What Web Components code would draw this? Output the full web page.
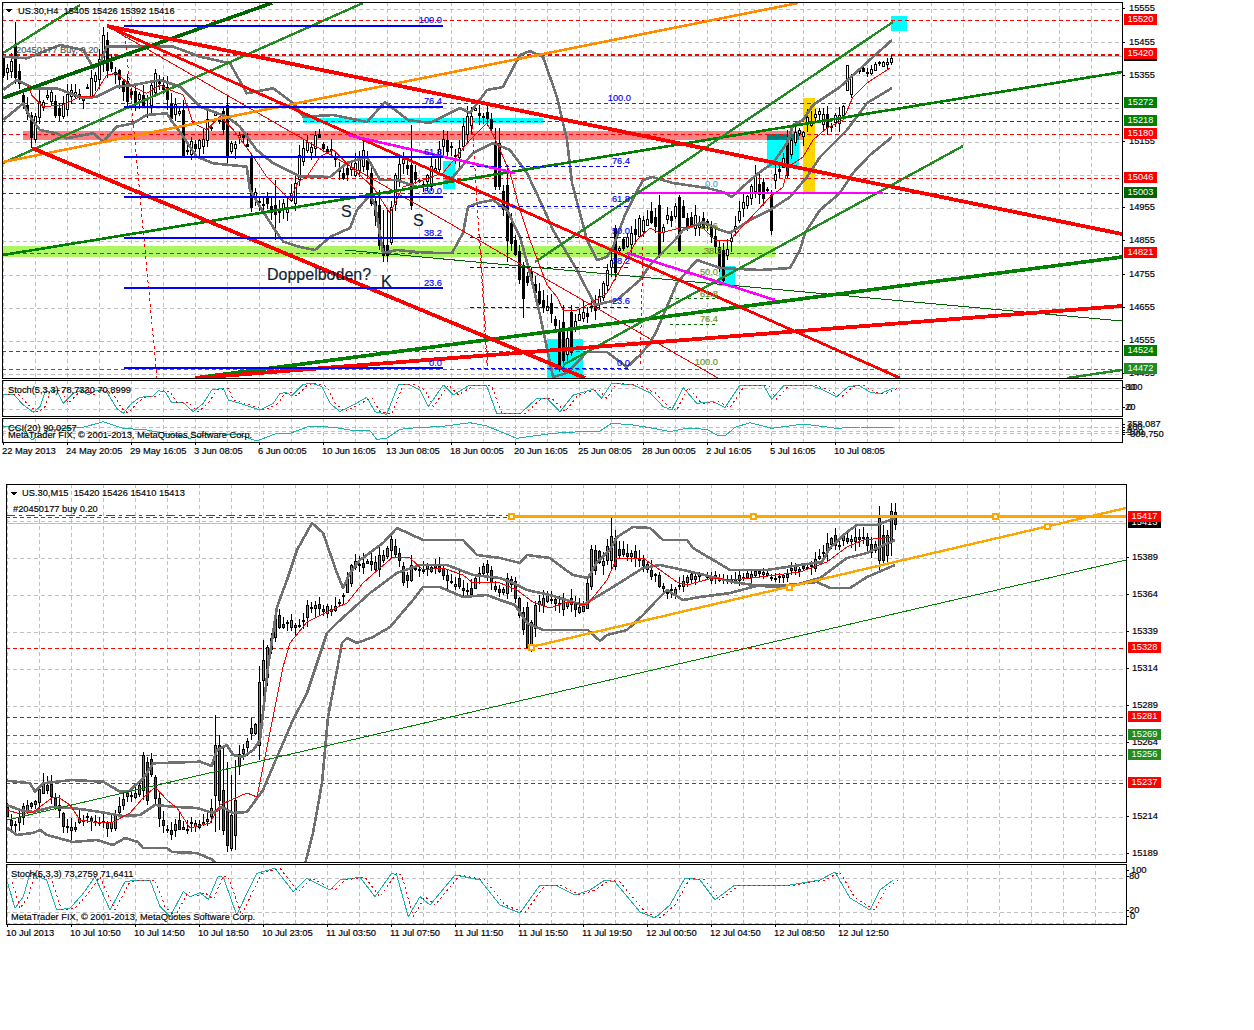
<!doctype html>
<html>
<head>
<meta charset="utf-8">
<title>US.30 charts</title>
<style>
  html, body { margin: 0; background: #fff; }
</style>
</head>
<body>
<mt-screen>
  <mt-window name="h4" axis="22 May 2013|24 May 20:05|29 May 16:05|3 Jun 08:05|6 Jun 00:05|10 Jun 16:05|13 Jun 08:05|18 Jun 00:05|20 Jun 16:05|25 Jun 08:05|28 Jun 00:05|2 Jul 16:05|5 Jul 16:05|10 Jul 08:05">
    <mt-pane name="h4main"></mt-pane>
    <mt-pane name="h4stoch"></mt-pane>
    <mt-pane name="h4cci"></mt-pane>
  </mt-window>
  <mt-window name="m15" axis="10 Jul 2013|10 Jul 10:50|10 Jul 14:50|10 Jul 18:50|10 Jul 23:05|11 Jul 03:50|11 Jul 07:50|11 Jul 11:50|11 Jul 15:50|11 Jul 19:50|12 Jul 00:50|12 Jul 04:50|12 Jul 08:50|12 Jul 12:50">
    <mt-pane name="m15main"></mt-pane>
    <mt-pane name="m15stoch"></mt-pane>
  </mt-window>
</mt-screen>

<script>
// zoom crop coords -> page coords
const z = (ox, oy, a) => { const r = []; for (let i = 0; i < a.length; i += 2) r.push([ox + a[i] / 3, oy + a[i + 1] / 3]); return r; };
const pg = a => z(0, 0, a.map(v => v * 3));

const RED = '#ff0000', GREEN = '#008000', DKGREEN = '#006400', FOREST = '#228b22', ORANGE = '#ff8c00', BLUE = '#0000ff', MAGENTA = '#ff00ff', GOLD = '#ffa500', GRAY = '#707070';
const DASH = '4 3';

// ---- price paths ---------------------------------------------------------
const h4Mid = [
  ...z(0, 0, [6,190,20,215,45,170,60,260,85,320,100,410,118,320,140,280,165,300,180,370,190,320,215,265,240,290,265,270,290,225,305,150,320,160,345,220,370,245,390,290,420,300,445,310,470,220,490,260,520,340,548,310,552,450,570,450,600,430,630,370,670,340,685,460,710,410,750,440,755,590,790,595,830,640,860,625,885,580,900,470,945,420,980,430]),
  ...z(330, 40, [40,405,75,390,110,340,130,480,150,590,175,640,190,500,210,360,240,365,268,440,290,440,320,370,345,310,385,340,410,250,445,210,470,220,490,270,497,420,520,480,545,590,570,680]),
  ...z(420, 230, [300,170,330,140,360,200,390,240,420,300,430,380,460,280,490,240,530,240,550,190,570,100,600,50,630,30]),
  ...pg([640,225,650,215,660,232,670,215,680,210,690,225,700,220,710,232,722,262,731,238]),
  ...z(640, 0, [300,630,320,600,345,540,380,590,405,530,430,510,445,450,465,405,490,400,505,370,540,350,580,370,610,330,625,295,640,220,660,210,690,215,705,195,730,195,755,170])
];
const h4Over = [
  [15,22,45,77,84],[31,112,115,137,148],[103,27,60,35,72],[107,32,40,70,78],[183,100,110,156,158],[227,96,105,155,165],[252,155,157,207,212],
  [275,180,205,214,240],[380,190,205,245,250],[385,210,245,255,262],[411,125,165,205,210],[497,128,143,186,190],[508,165,185,240,262],[524,262,265,298,318],
  [560,320,330,368,372],[564,305,322,360,372],[572,305,312,352,356],[614,225,228,272,280],[660,195,205,255,258],[680,195,197,250,252],[718,240,247,268,272],[722,243,250,280,283],[770,190,195,230,235],[787,130,143,175,178],[846,75,90,65,85],[848,80,88,60,100]
];
const m15Mid = [
  ...z(0, 740, [22,215,34,250,46,265,58,245,82,195,105,190,118,160,130,125,155,150,178,210,190,240,205,260,225,265,250,240,275,230,300,240,325,260,345,250,360,190,380,180,405,150,420,170,430,50,445,40,465,130,478,230,490,260,515,280,528,250,550,265,575,250]),
  ...z(0, 740, [600,250,630,230]),
  ...z(180, 510, [238,620,262,440,275,390,290,320,310,350,345,340,370,335,382,290,400,290,430,295,455,300,480,270,500,240,515,170,550,160,585,175,600,145,635,100,645,100,660,150,680,220,695,175,730,175,770,165,790,180,800,220,830,215,850,235,862,225,880,240,910,160,925,175,945,235,970,250,995,200,1010,250]),
  ...z(500, 490, [45,310,80,420,95,430,105,360,130,330,155,320,175,350,205,330,240,365,262,330,275,210,290,190,310,225,335,145,345,175,370,190,405,195,440,230,475,260,490,300,515,310,540,290,550,280,575,260,600,250,640,265,680,275,720,265,760,250,800,250,830,265,850,260,875,240,900,230,940,225,970,185,995,140,1020,160,1040,145,1090,140,1105,170,1125,180,1140,125,1175,120,1185,90])
];
const m15Over = [
  [215,715,795,745,832],[219,735,745,800,830],[223,745,790,830,835],[227,762,810,845,852],[231,775,848,815,851],[235,760,835,800,850],
  [143,752,790,755,800],[147,757,762,800,805],[259,666,745,682,760],[263,640,680,660,700],[527,602,607,647,648],[531,620,650,622,652],
  [592,545,586,549,590],[596,545,550,570,575],[612,518,560,536,570],[616,530,538,566,570],[880,506,560,518,570],[884,525,535,560,565],[888,530,555,535,565],[892,503,540,511,556],[895,503,512,524,530]
];

// ---- indicator lines -----------------------------------------------------
const h4Upper = [...z(0, 0, [10,170,80,175,180,135,250,150,280,205,300,190,320,140,520,140,600,170,690,190,740,280,820,265,880,310,910,350,1000,345]), ...pg([367,122,385,102,408,120,430,123,460,108,470,113,487,90,503,87,520,55,530,51,543,57,557,97,567,140,572,183,587,240,597,260,607,257,613,247,625,215,635,195,643,180,652,177,673,183,707,188,723,192,732,197,747,183,760,172,773,163,787,143,793,125,803,120,813,105,840,87,873,57,892,40])];
const h4Middle = [...z(0, 0, [10,270,50,240,100,265,170,265,250,295,290,290,350,260,400,255,480,240,540,260,600,320,680,350,720,380,770,450,820,490,880,520,900,530,960,530]), ...pg([330,177,347,163,367,157,380,180,397,180,417,187,443,183,453,177,473,153,493,143,510,150,527,173,543,207,553,230,577,270,595,305,617,300,640,280,650,265,675,240,683,230,703,222,720,230,730,233,750,220,770,210,790,197,807,177,820,157,847,130,867,103,892,88])];
const h4Lower = [...z(0, 0, [10,360,40,335,70,310,90,350,120,390,170,400,200,415,280,400,310,425,350,380,400,370,440,345,500,340,520,370,550,410,590,470,640,490,740,500,750,570,780,620,825,690,850,725]), ...pg([300,247,315,250,330,237,350,228,357,210,370,195,375,205,383,253,397,250,417,252,437,253,452,253,463,233,468,207,478,203,493,200,507,210,520,237,530,273,540,315,553,377,567,373,587,352,607,352,627,367,640,355,650,343,657,330,677,283,697,260,720,268,760,270,790,268,800,250,805,233,820,210,840,193,853,173,870,155,892,137])];
const h4Ma = [...z(0, 0, [85,255,95,285,130,320,190,315,240,290,280,290,320,225,350,220,390,255,440,280,480,255,510,270,550,285,580,370,620,390,660,350,700,390,760,470,800,530,870,600,895,545,920,530,960,470,1000,450,1040,490]), ...pg([373,187,390,213,403,187,423,180,443,173,470,140,487,123,497,143,510,173,520,210,530,240,547,285,557,297,563,310,577,310,593,302,607,293,620,270,637,240,650,228,660,233,680,228,700,225,715,240,730,240,770,197,783,187,788,167,803,157,813,140,827,128,843,120,853,97,867,83,890,68])];

const m15Upper = [...z(0, 740, [22,122,90,130,105,155,130,130,215,120,310,125,360,155,385,155,430,115,460,70,600,65,635,78,650,30,680,15,700,45,730,50,760,30,780,0]), ...pg([268,667,277,607,287,580,297,550,312,523,323,533,337,573,343,588,350,573,360,560,383,543,397,528,423,540,463,540,477,555,500,558,520,563,527,555,550,558,563,568,573,575,588,578,597,562,610,550,617,537,633,527,650,528,663,540,687,540,693,548,730,570,767,570,800,565,822,562,830,548,847,532,857,525,877,525,895,518])];
const m15Middle = pg([7,805,20,810,33,812,52,807,72,808,87,810,100,812,123,816,140,815,155,805,177,807,197,808,213,813,222,807,233,813,247,812,263,790,277,757,293,720,307,693,327,633,337,623,370,593,397,573,420,565,447,565,473,575,500,578,513,583,527,590,550,595,583,605,613,587,643,568,660,565,683,570,713,577,733,582,753,585,773,587,788,587,820,578,847,558,867,553,895,540]);
const m15Lower1 = pg([7,828,17,835,33,833,40,830,47,835,73,842,97,840,113,845,125,838,138,842,143,848,167,848,172,852,197,853,213,860,216,864]);
const m15Lower2 = pg([305,864,313,833,322,783,328,717,337,670,342,643,347,638,357,643,373,637,390,627,413,600,423,587,440,587,463,597,487,595,500,600,515,605,527,623,543,630,588,630,600,641,607,635,627,630,643,615,657,600,667,590,683,600,700,597,730,593,760,585,787,585,817,582,830,588,850,588,867,577,895,565]);
const m15Ma = pg([7,810,20,814,33,812,52,798,58,797,70,805,80,820,100,823,113,822,130,813,143,798,155,787,167,800,177,808,190,828,210,823,220,805,233,799,247,793,257,797,263,767,273,717,283,667,290,643,307,622,327,612,347,603,363,583,380,568,393,557,410,558,423,570,443,568,463,575,473,583,490,582,500,583,517,590,533,602,550,608,567,602,587,605,607,580,617,558,643,558,660,570,677,582,687,585,713,578,733,580,760,577,800,572,827,562,847,547,863,540,893,537]);

const h4StochLine = [...z(0, 370, [10,75,40,72,70,105,100,127,120,110,135,65,170,60,190,100,220,70,245,60,265,75,290,60,320,65,350,115,370,130,395,100,420,82,460,78,475,62,495,65,515,98,550,98,580,125,610,100,635,60,670,55,685,90,730,103,780,120,820,100,840,70,860,68,875,78,910,43,935,40,965,50,990,100,1020,125,1060,105,1100,82,1125,125,1160,133,1195,45,1225,43,1260,60]), ...z(420, 230, [25,530,70,465,100,495,150,465,200,468,230,550,300,552,350,505,380,505,420,545,460,495,520,478,545,505,575,460,640,465,690,488,730,530,755,540,790,473,830,520,880,515,915,533,960,465,1030,465,1055,508,1090,468,1170,465,1210,480,1250,500]), ...pg([848,387,858,385,870,392,880,394,893,388])];
const h4CciLine = [...z(0, 370, [10,168,60,175,95,210,150,180,200,175,250,172,310,155,370,175,440,180,520,195,570,205,640,190,720,195,770,213,830,190,870,190,930,168,1000,172,1050,180,1110,182,1130,208,1160,205,1200,178,1260,172]), ...z(420, 230, [60,590,150,578,200,588,290,625,400,610,480,605,540,603,575,580,640,585,700,595,750,605,800,595,860,598,890,615,915,618,945,592,990,578,1055,595,1150,582,1250,595]), ...pg([860,427,893,428])];
const m15StochLine = [...z(0, 740, [22,425,45,505,70,470,90,400,140,420,170,510,210,505,250,460,285,410,330,510,375,425,410,420,450,420,480,500,510,530,550,455,570,470,600,458,625,478,655,408,670,412,710,525,750,440,770,400,825,385,880,455,920,415,990,450,1020,420,1080,412,1125,470,1175,400,1190,405,1225,530,1260,470]), ...pg([430,905,455,875,480,880,500,905,520,913,540,885,555,885,575,895,590,890,605,880,615,882,640,912,655,918,670,905,685,878,700,880,715,900,735,885,760,885,790,885,820,880,835,872,850,898,870,910,880,890,893,880])];

// ---- pane definitions ----------------------------------------------------
const fibLines = [[26,'100.0',20],[107,'76.4',101],[157,'61.8',152],[197,'50.0',191],[238,'38.2',233],[288,'23.6',283],[368,'0.0',363]];
const dottedFib = [[166,'76.4',161,630],[206,'61.8',199,630],[237,'50.0',231,630],[267,'38.2',261,630],[307,'23.6',301,630],[368,'0.0',363,630]];

const PANES = {
  h4main: {
    x: 2, y: 2, w: 1121, h: 377, lx: 6, gx: [3, 32], gy: [9, 42, 75, 108, 142, 175, 208, 241, 275, 308, 341, 374],
    zones: [[3,246,772,11,'#adf562'],[23,131,787,9,'#ff8080'],[303,118,240,5,'#00ffff'],[443,161,12,28,'#00ffff'],[547,339,36,39,'#00ffff'],[719,266,16,20,'#00ffff'],[767,134,32,34,'#00ffff'],[767,134,32,6,'#008080'],[891,16,16,15,'#00ffff'],[803,98,12,95,'#ffd700']],
    hlines: [[20,RED],[55,GREEN],[54,RED],[134,RED],[178,RED],[253,RED],[103,DKGREEN],[121,DKGREEN],[193,DKGREEN],[351,GREEN],[369,FOREST]],
    bid: 56,
    candles: { mid: h4Mid, over: h4Over, x0: 3, n: 223, amp: 7, wick: 10, up: '#ffffff', down: '#000000', seed: 7, calm: [[840, 900, 3, 4]] },
    bands: [[h4Upper, GRAY, 2.6], [h4Middle, GRAY, 2.6], [h4Lower, GRAY, 2.6], [h4Ma, RED, 1]],
    lines: [
      [125,35,157,378,RED,1,'3 3'],[132,113,132,125,RED,1,'3 3'],[472,120,487,365,RED,1,'3 3'],[480,237,488,368,RED,1,'3 3'],[643,247,640,367,RED,1,'3 3'],
      [107,26,718,378,RED,1],[345,250,1122,321,DKGREEN,1],
      [3,98,272,3,DKGREEN,3.6],[3,53,80,5,FOREST,2.4],[3,163,363,3,FOREST,2.4],[3,255,1122,72,GREEN,2.6],[195,378,1122,257,GREEN,3.6],[535,262,893,22,FOREST,2.4],[563,365,963,146,FOREST,2.4],[1067,378,1122,370,FOREST,2.4],
      [3,162,798,3,ORANGE,2.6],
      [107,26,1122,234,RED,3.8],[107,26,900,378,RED,2.8],[32,148,585,378,RED,3.8],[195,378,1122,306,RED,3.8],
      [348,135,515,173,MAGENTA,2.6],[627,253,775,300,MAGENTA,2.6],[640,193,883,193,MAGENTA,2],
      ...fibLines.map(f => [124,f[0],443,f[0],BLUE,2]),
      ...dottedFib.map(f => [470,f[0],f[3],f[0],BLUE,1,'4 3']),
      [670,298,718,298,DKGREEN,1,'3 3'],[670,324,718,324,DKGREEN,1,'3 3']
    ],
    texts: [
      [18,14,'US.30,H4  15405 15426 15392 15416','#000'],[16,53,'20450177 Buy, 0.20','#4a5a5a'],
      ...fibLines.map(f => [442,f[2]+3,f[1],BLUE,9.3,'end']),
      ...dottedFib.map(f => [f[3],f[2]+3,f[1],BLUE,9.3,'end']),
      [631,101,'100.0',BLUE,9.3,'end'],
      [718,187,'0.0','#48a8c8',9.3,'end'],[718,229,'23.6','#6b8e23',9.3,'end'],[722,254,'38.2','#6b8e23',9.3,'end'],[718,275,'50.0','#6b8e23',9.3,'end'],[718,297,'61.8','#6b8e23',9.3,'end'],[718,322,'76.4','#6b8e23',9.3,'end'],[718,365,'100.0','#6b8e23',9.3,'end'],
      [341,217,'S','#111c33',16],[413,226,'S','#111c33',16],[267,280,'Doppelboden?','#111c33',16],[381,287,'K','#111c33',16]
    ],
    arrow: [5, 9], tags: [
      ['15555',9],['15455',43],['15355',76],['15255',109,1],['15155',142],['15055',175,1],['14955',208],['14855',241],['14755',275],['14655',308],['14555',341],['14455',374],
      ['15416',56,'#000'],['15520',20,RED],['15420',54,RED],['15272',103,GREEN],['15218',121,GREEN],['15180',134,RED],['15046',178,RED],['15003',193,DKGREEN],['14821',253,RED],['14524',351,GREEN],['14472',369,FOREST]
    ]
  },
  h4stoch: {
    x: 2, y: 380, w: 1121, h: 37, gx: [3, 32], gy: [388, 409],
    osc: [[h4StochLine, '#20b2aa', 0], [h4StochLine, RED, 5]],
    texts: [[8,393,'Stoch(5,3,3) 78,7330 70,8999','#000']],
    tags: [['100',388,null,4],['80',388,null,2],['20',408,null,2],['0',408,null,4]]
  },
  h4cci: {
    x: 2, y: 418, w: 1121, h: 25, gx: [3, 32], gy: [427, 431, 433],
    osc: [[h4CciLine, '#20b2aa', 0]],
    texts: [[8,431,'CCI(20) 90,0257','#000'],[8,438,'MetaTrader FIX, © 2001-2013, MetaQuotes Software Corp.','#000']],
    tags: [['358,087',425,null,4],['100',428,null,4],['0',431,null,4],['-100',433,null,2],['-309,750',435,null,4]]
  },
  m15main: {
    x: 6, y: 484, w: 1121, h: 379, lx: 5, gx: [7, 32], gy: [521, 558, 595, 632, 669, 706, 743, 780, 817, 854],
    zones: [],
    hlines: [[515,GREEN,'9 4 3 4'],[517,RED],[648,RED],[717,RED],[783,RED],[735,FOREST],[755,FOREST]],
    bid: 523,
    candles: { mid: m15Mid, over: m15Over, x0: 7, n: 223, amp: 4.5, wick: 9, up: '#3cb34a', down: '#b22222', seed: 11, calm: [[680, 810, 3, 6]] },
    bands: [[m15Upper, GRAY, 2.6], [m15Middle, GRAY, 2.6], [m15Lower1, GRAY, 2.6], [m15Lower2, GRAY, 2.6], [m15Ma, RED, 1]],
    lines: [[7,820,1126,560,GREEN,1],[510,516.5,1126,516.5,GOLD,2.4],[531,647,1126,508,GOLD,2.4]],
    handles: [[511,516],[753,516],[995,516],[531,647],[789,587],[1047,526]],
    texts: [[22,496,'US.30,M15  15420 15426 15410 15413','#000'],[13,512,'#20450177 buy 0.20','#000']],
    arrow: [10, 492], tags: [
      ['15389',558],['15364',595],['15339',632],['15314',669],['15289',706],['15264',743],['15239',780,1],['15214',817],['15189',854],
      ['15413',523,'#000'],['15417',517,RED],['15328',648,RED],['15281',717,RED],['15269',735,FOREST],['15256',755,FOREST],['15237',783,RED]
    ]
  },
  m15stoch: {
    x: 6, y: 864, w: 1121, h: 61, gx: [7, 32], gy: [878, 912, 923],
    osc: [[m15StochLine, '#20b2aa', 0], [m15StochLine, RED, 5]],
    texts: [[11,877,'Stoch(5,3,3) 73,2759 71,6411','#000'],[11,920,'MetaTrader FIX, © 2001-2013, MetaQuotes Software Corp.','#000']],
    tags: [['100',871,null,4],['80',877,null,2],['20',911,null,2],['0',917,null,3]]
  }
};

// ---- svg helpers ---------------------------------------------------------
const poly = (p, color, w, dash, dx = 0) =>
  `<polyline fill="none" stroke-linejoin="round" points="${p.map(q => (q[0] + dx).toFixed(1) + ',' + q[1].toFixed(1)).join(' ')}" stroke="${color}" stroke-width="${w}"${dash ? ` stroke-dasharray="${dash}"` : ''}/>`;
const seg = (x1, y1, x2, y2, color, w, dash) =>
  `<line x1="${x1}" y1="${y1}" x2="${x2}" y2="${y2}" stroke="${color}" stroke-width="${w}"${dash ? ` stroke-dasharray="${dash}"` : ''}/>`;

function midAt(path, x) {
  if (x <= path[0][0]) return path[0][1];
  for (let i = 1; i < path.length; i++) {
    if (x <= path[i][0]) {
      const a = path[i - 1], b = path[i], t = (x - a[0]) / ((b[0] - a[0]) || 1);
      return a[1] + (b[1] - a[1]) * t;
    }
  }
  return path[path.length - 1][1];
}

function candles(c) {
  let seed = c.seed;
  const rnd = () => (seed = (seed * 16807) % 2147483647) / 2147483647;
  let wicks = '', up = '', border = '', down = '';
  const bar = (x, hi, o, cl, lo) => {
    const t = Math.round(Math.min(o, cl)), b = Math.max(t + 1, Math.round(Math.max(o, cl)));
    wicks += `M${x} ${Math.round(hi)}h1V${Math.round(lo)}h-1z`;
    border += `M${x - 1} ${t}h3V${b + 1}h-3z`;
    if (cl < o) up += `M${x} ${t + 1}h1V${b}h-1z`;
    else if (c.up !== '#ffffff') down += `M${x} ${t + 1}h1V${b}h-1z`;
  };
  for (let k = 0; k < c.n; k++) {
    const x = c.x0 + 4 * k;
    const calm = c.calm.find(v => x >= v[0] && x <= v[1]);
    const amp = calm ? calm[2] : c.amp, wick = calm ? calm[3] : c.wick;
    const j1 = rnd() - 0.5, j2 = rnd() - 0.5, w1 = rnd(), w2 = rnd();
    const o = midAt(c.mid, x - 2) + j1 * amp * 2;
    const cl = midAt(c.mid, x + 2) + j2 * amp * 2;
    const hit = c.over.find(v => Math.abs(v[0] - x) <= 2);
    if (hit) bar(x, hit[1], hit[2], hit[3], hit[4]);
    else bar(x, Math.min(o, cl) - w1 * wick - 1, o, cl, Math.max(o, cl) + w2 * wick + 1);
  }
  return `<path d="${wicks}${border}" fill="#000"/><path d="${up}" fill="${c.up}"/><path d="${down}" fill="${c.down}"/>`;
}

function drawPane(p) {
  let s = '';
  // grid
  for (let x = p.gx[0]; x < p.x + p.w; x += p.gx[1]) s += seg(x + 0.5, p.y, x + 0.5, p.y + p.h, '#c0c0c0', 1, DASH);
  for (const y of p.gy) s += seg(p.x, y + 0.5, p.x + p.w, y + 0.5, '#c0c0c0', 1, DASH);
  // background objects
  for (const r of p.zones || []) s += `<rect x="${r[0]}" y="${r[1]}" width="${r[2]}" height="${r[3]}" fill="${r[4]}"/>`;
  for (const l of p.hlines || []) s += seg(p.x, l[0] + 0.5, p.x + p.w, l[0] + 0.5, l[1], 1, l[2] || DASH);
  if (p.bid) s += seg(p.x, p.bid + 0.5, p.x + p.w, p.bid + 0.5, '#c0c0c0', 1);
  if (p.candles) s += candles(p.candles);
  for (const b of p.bands || []) s += poly(b[0], b[1], b[2]);
  for (const o of p.osc || []) s += poly(o[0], o[1], 1, o[2] ? '2 3' : '', o[2]);
  for (const l of p.lines || []) s += seg(l[0], l[1], l[2], l[3], l[4], l[5], l[6]);
  for (const h of p.handles || []) s += `<rect x="${h[0] - 2.5}" y="${h[1] - 2.5}" width="5" height="5" fill="#fff" stroke="${GOLD}" stroke-width="2"/>`;
  if (p.arrow) s += `<path d="M${p.arrow[0] + 1} ${p.arrow[1]}h6l-3 4z" fill="#000"/>`;
  // texts stay real text
  for (const t of p.texts || []) {
    s += `<text x="${t[0]}" y="${t[1]}" fill="${t[3]}" stroke="${t[3]}" stroke-width="0.15" font-size="${t[4] || 9.3}"${t[5] ? ` text-anchor="${t[5]}"` : ''} style="white-space:pre">${t[2]}</text>`;
  }
  return `<svg xmlns="http://www.w3.org/2000/svg" width="${p.w - 2}" height="${p.h - 2}" viewBox="${p.x + 1} ${p.y + 1} ${p.w - 2} ${p.h - 2}">${s}</svg>`;
}

// ---- components ----------------------------------------------------------
class MtScreen extends HTMLElement {
  constructor() {
    super();
    this.attachShadow({ mode: 'open' });
    this.shadowRoot.innerHTML = /* html */ `
      <style>
        :host {
          display: flex;
          flex-direction: column;
          gap: 24px;
          padding: 2px 0 0 2px;
          width: 1252px;
          height: 1028px;
          overflow: hidden;
          font-family: "Liberation Sans", Arial, sans-serif;
          font-size: 9.3px;
          color: #000;
        }
      </style>
      <slot></slot>
    `;
  }
}

class MtWindow extends HTMLElement {
  constructor() {
    super();
    this.attachShadow({ mode: 'open' });
  }

  connectedCallback() {
    const labels = this.getAttribute('axis').split('|');
    const cells = labels.map(t => `<span>${t}</span>`).join('');
    this.shadowRoot.innerHTML = /* html */ `
      <style>
        :host {
          display: flex;
          flex-direction: column;
          gap: 1px;
        }
        :host([name="m15"]) { margin-left: 4px; }
        .time {
          display: flex;
          height: 17px;
          margin-top: -1px;
          padding-left: 1px;
          text-shadow: 0.4px 0 rgba(0, 90, 200, 0.45), -0.4px 0 rgba(220, 120, 0, 0.35);
        }
        .time span {
          flex: 0 0 64px;
          box-sizing: border-box;
          line-height: 17px;
          text-indent: -1px;
          white-space: nowrap;
          position: relative;
        }
        .time span::before {
          content: '';
          position: absolute;
          left: 0;
          top: 0;
          width: 1px;
          height: 2px;
          background: #000;
        }
      </style>
      <slot></slot>
      <div class="time">${cells}</div>
    `;
  }
}

class MtPane extends HTMLElement {
  constructor() {
    super();
    this.attachShadow({ mode: 'open' });
  }

  connectedCallback() {
    const p = PANES[this.getAttribute('name')];
    const tags = p.tags.map(t => {
      const [text, y, bg, off] = t;
      if (bg === 1) return '';
      if (bg) return `<b style="top:${y - p.y - 6}px;background:${bg}">${text}</b>`;
      return `<i style="top:${y - p.y - 1}px"></i><span style="top:${y - p.y - 6}px;left:${off === undefined ? p.lx : off}px">${text}</span>`;
    }).join('');
    this.shadowRoot.innerHTML = /* html */ `
      <style>
        :host {
          display: flex;
          width: ${p.w + 60}px;
          height: ${p.h}px;
        }
        .plot {
          box-sizing: border-box;
          flex: 0 0 ${p.w}px;
          border: 1px solid #000;
          background: #fff;
          overflow: hidden;
        }
        svg {
          display: block;
          shape-rendering: crispEdges;
          font-family: "Liberation Sans", Arial, sans-serif;
        }
        .axis {
          position: relative;
          flex: 1;
        }
        /* axis labels sit at their price, so they are placed on the scale */
        .axis span, .axis b {
          position: absolute;
          height: 11px;
          line-height: 11px;
          font-weight: normal;
          white-space: nowrap;
        }
        .axis span {
          text-shadow: 0.4px 0 rgba(0, 90, 200, 0.45), -0.4px 0 rgba(220, 120, 0, 0.35);
        }
        .axis b {
          left: 1px;
          width: 33px;
          color: #fff;
          text-align: center;
        }
        .axis i {
          position: absolute;
          left: 0;
          width: 2px;
          height: 1px;
          background: #000;
        }
      </style>
      <div class="plot">${drawPane(p)}</div>
      <div class="axis">${tags}</div>
    `;
  }
}

customElements.define('mt-pane', MtPane);
customElements.define('mt-window', MtWindow);
customElements.define('mt-screen', MtScreen);
</script>
</body>
</html>
